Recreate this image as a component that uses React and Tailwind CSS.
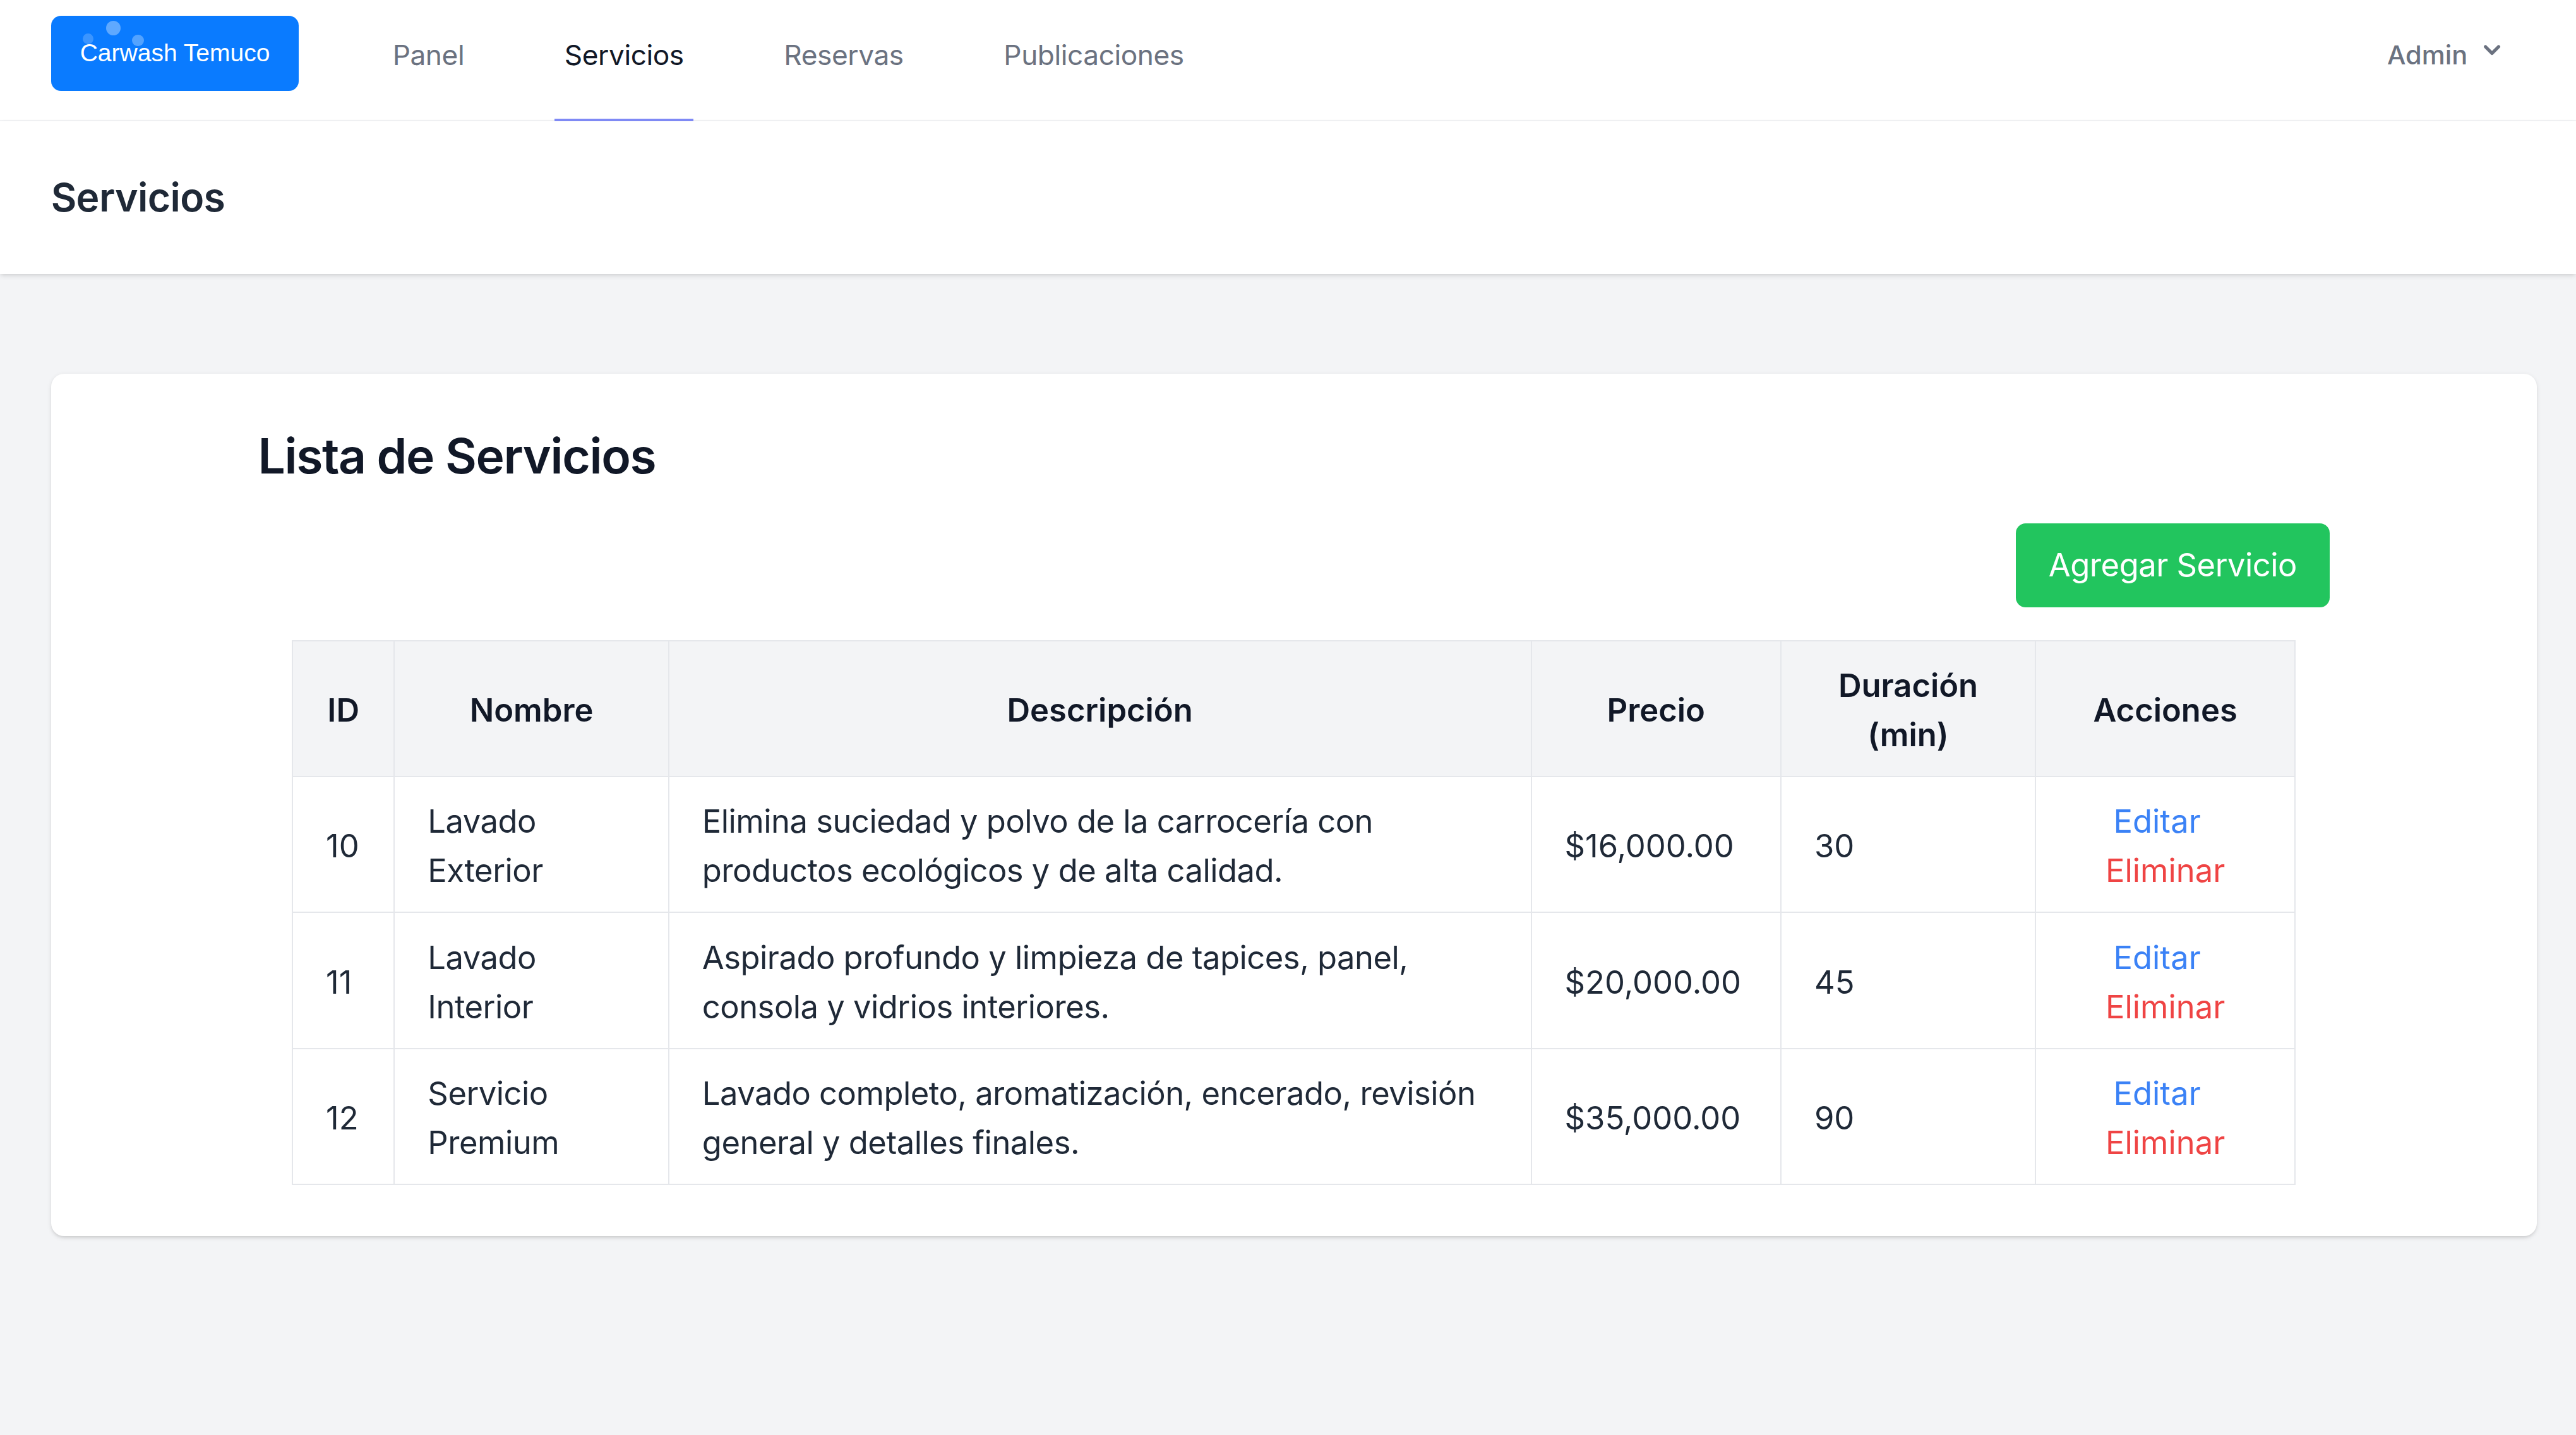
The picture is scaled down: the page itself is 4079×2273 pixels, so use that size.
import React from "react";

const rows = [
  {
    id: 10,
    name: "Lavado Exterior",
    desc: "Elimina suciedad y polvo de la carrocería con productos ecológicos y de alta calidad.",
    price: "$16,000.00",
    dur: 30,
  },
  {
    id: 11,
    name: "Lavado Interior",
    desc: "Aspirado profundo y limpieza de tapices, panel, consola y vidrios interiores.",
    price: "$20,000.00",
    dur: 45,
  },
  {
    id: 12,
    name: "Servicio Premium",
    desc: "Lavado completo, aromatización, encerado, revisión general y detalles finales.",
    price: "$35,000.00",
    dur: 90,
  },
];

function Logo() {
  return (
    <div className="relative flex h-[46px] w-[151px] items-center justify-center rounded-md bg-[#0a7bff]">
      <span className="absolute left-[33.5px] top-[3px] h-[9px] w-[9px] rounded-full bg-white/35" />
      <span className="absolute left-[19.5px] top-[11px] h-[6.5px] w-[6.5px] rounded-full bg-white/20" />
      <span className="absolute left-[49.5px] top-[11.5px] h-[7px] w-[7px] rounded-full bg-white/30" />
      <span className="relative font-['Liberation_Sans',Arial,sans-serif] text-[15px] text-white">
        Carwash Temuco
      </span>
    </div>
  );
}

function NavLink({ children, active }) {
  return (
    <a
      href="#"
      className={
        "inline-flex h-[74px] items-center border-b-2 px-[6px] pb-[5px] text-[17px] tracking-[-0.01em] " +
        (active
          ? "border-[#818cf8] text-[#111827]"
          : "border-transparent text-[#6b7280]")
      }
    >
      {children}
    </a>
  );
}

const cell = "border border-[#e5e7eb] px-5 pt-[12px] pb-[10px]";

export default function App() {
  return (
    <div className="w-[1568px] [zoom:2.6014] font-['Inter',sans-serif]">
      <div className="flex min-h-[874px] flex-col bg-[#f3f4f6]">
        <nav className="border-b border-[#f3f4f6] bg-white">
          <div className="flex h-[73px] justify-between pl-[31px] pr-[41px]">
            <div className="flex">
              <div className="flex items-center pb-[8px]">
                <Logo />
              </div>
              <div className="ml-[51px] flex gap-[49px]">
                <NavLink>Panel</NavLink>
                <NavLink active>Servicios</NavLink>
                <NavLink>Reservas</NavLink>
                <NavLink>Publicaciones</NavLink>
              </div>
            </div>
            <div className="flex items-center pb-[6px]">
              <button className="flex items-center text-[16px] font-medium text-[#6b7280]">
                <span>Admin</span>
                <svg
                  viewBox="0 0 20 20"
                  fill="currentColor"
                  className="ml-[5px] h-5 w-5 -translate-y-[3px]"
                >
                  <path
                    fillRule="evenodd"
                    d="M5.293 7.293a1 1 0 011.414 0L10 10.586l3.293-3.293a1 1 0 111.414 1.414l-4 4a1 1 0 01-1.414 0l-4-4a1 1 0 010-1.414z"
                    clipRule="evenodd"
                  />
                </svg>
              </button>
            </div>
          </div>
        </nav>

        <header className="relative bg-white shadow">
          <div className="flex h-[93px] items-center pl-[31px]">
            <h2 className="text-[24px] font-semibold leading-8 tracking-[-0.01em] text-[#1f2937]">
              Servicios
            </h2>
          </div>
        </header>

        <main className="flex-1 pt-[61px] pb-12">
          <div className="ml-[31px] mr-[24px] rounded-lg bg-white px-8 pt-8 pb-[31px] shadow-sm">
            <div className="mx-auto max-w-[1261px]">
              <h1 className="mb-[23px] text-[29.5px] font-semibold leading-9 tracking-[-0.018em] text-[#111827]">
                Lista de Servicios
              </h1>
              <div className="mb-5 flex justify-end">
                <button className="flex h-[51px] w-[191px] items-center justify-center rounded-md bg-[#22c55e] text-[19.5px] tracking-[-0.01em] text-white">
                  Agregar Servicio
                </button>
              </div>
              <table className="mx-auto w-[1219px] table-fixed border-collapse border border-[#e5e7eb] text-[19.5px] leading-[30px] text-[#1f2937]">
                <colgroup>
                  <col className="w-[62px]" />
                  <col className="w-[167px]" />
                  <col className="w-[525px]" />
                  <col className="w-[152px]" />
                  <col className="w-[155px]" />
                  <col className="w-[158px]" />
                </colgroup>
                <thead className="bg-[#f3f4f6]">
                  <tr>
                    {["ID", "Nombre", "Descripción", "Precio", "Duración (min)", "Acciones"].map(
                      (h) => (
                        <th
                          key={h}
                          className={cell + " text-center font-semibold text-[#111827]"}
                        >
                          {h}
                        </th>
                      )
                    )}
                  </tr>
                </thead>
                <tbody>
                  {rows.map((r) => (
                    <tr key={r.id}>
                      <td className={cell}>{r.id}</td>
                      <td className={cell + " tracking-[-0.01em]"}>{r.name}</td>
                      <td className={cell + " tracking-[-0.01em]"}>{r.desc}</td>
                      <td className={cell}>{r.price}</td>
                      <td className={cell}>{r.dur}</td>
                      <td className={cell + " text-center"}>
                        <a href="#" className="mr-2.5 text-[#3b82f6]">
                          Editar
                        </a>{" "}
                        <button className="text-[#ef4444]">Eliminar</button>
                      </td>
                    </tr>
                  ))}
                </tbody>
              </table>
            </div>
          </div>
        </main>
      </div>
    </div>
  );
}
